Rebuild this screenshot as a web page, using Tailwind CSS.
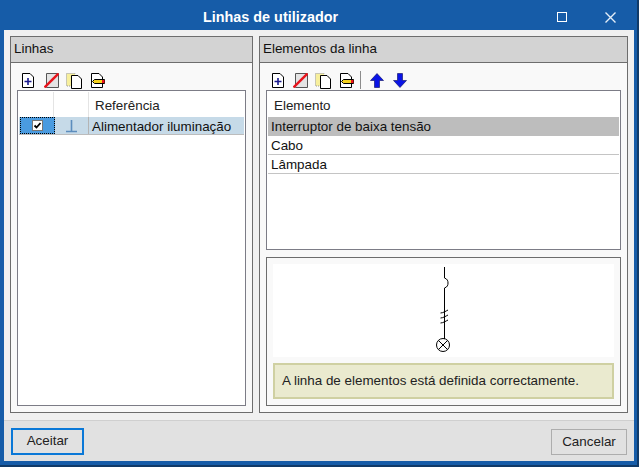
<!DOCTYPE html>
<html lang="en">
<head>
  <meta charset="UTF-8" />
  <title>Linhas de utilizador</title>
  <script src="https://cdn.jsdelivr.net/npm/@tailwindcss/browser@4"></script>
</head>
<body class="bg-[#2a3a4a] overflow-hidden font-['Liberation_Sans',Arial,sans-serif] text-[13.4px] text-[#111]">
  <div class="w-[639px] h-[467px] flex flex-col bg-[#165ca8] border-b-2 border-r-2 border-b-[#103a68] border-r-[#103a68]">

    <!-- Title bar -->
    <header class="h-[30px] flex items-center relative shrink-0">
      <h1 class="w-full text-center pr-[96px] pt-[5px] font-bold text-white text-[14.4px]">Linhas de utilizador</h1>
      <svg class="absolute left-[557px] top-[12px]" width="10" height="10" viewBox="0 0 10 10"><rect x="0.5" y="0.5" width="9" height="9" fill="none" stroke="#fff"/></svg>
      <svg class="absolute left-[605px] top-[12px]" width="11" height="11" viewBox="0 0 11 11"><path d="M0.5 0.5L10.5 10.5M10.5 0.5L0.5 10.5" stroke="#e4eef8" stroke-width="1.4"/></svg>
    </header>

    <div class="mx-[4px] mr-[3px] h-[431px] flex flex-col bg-[#f0f0f0]">
      <main class="h-[390px] flex gap-[6px] pl-[6px] pt-[6px] pr-[6px] shrink-0">

        <!-- Linhas -->
        <section class="w-[243px] h-[377px] border border-[#6d6d6d] bg-[#f9f9f9] flex flex-col">
          <div class="h-[26px] bg-[#d3d3d3] border-b border-[#6d6d6d] pl-[3px] flex items-center shrink-0">Linhas</div>
          <div class="h-[27px] pl-[11px] pt-[10px] flex items-start shrink-0">
            <svg width="12" height="15" viewBox="0 0 12 15"><path d="M0.5 0.5H8L11.5 4V14.5H0.5Z" fill="#fff" stroke="#000"/><path d="M6 5V12M2.5 8.5H9.5" stroke="#1a1a8c" stroke-width="1.6"/></svg>
            <svg class="ml-[10px]" width="15" height="15" viewBox="0 0 15 15"><path d="M2.5 0.5H14.5V14.5H2.5Z" fill="#e4e4e4" stroke="#555"/><path d="M0.5 14.5L14.5 0.5" stroke="#e8141c" stroke-width="2.4"/></svg>
            <svg class="ml-[7px]" width="16" height="16" viewBox="0 0 16 16"><path d="M0.5 0.5H9V13H0.5Z" fill="#f7ef9c" stroke="#999" stroke-dasharray="1 1"/><path d="M5.5 2.5H12L15.5 6V15.5H5.5Z" fill="#fff" stroke="#000"/></svg>
            <svg class="ml-[9px]" width="14" height="15" viewBox="0 0 14 15"><path d="M0.5 0.5H8L11.5 4V14.5H0.5Z" fill="#fff" stroke="#000"/><path d="M3.5 6.5H13.5V10.5H3.5L1.5 8.5Z" fill="#f5d21f" stroke="#000"/><rect x="11" y="7" width="2.5" height="3" fill="#e8141c"/></svg>
          </div>
          <div class="mx-[6px] h-[316px] border border-[#7c7c86] bg-white p-px">
            <div class="h-[25px] flex">
              <div class="w-[35px] border-r border-[#e4e4e4]"></div>
              <div class="w-[35px] border-r border-[#e4e4e4]"></div>
              <div class="pl-[6px] pt-[4px] text-[#222]">Referência</div>
            </div>
            <div class="h-[18px] flex bg-[#c6dae8] border-b border-[#bcbcbc]">
              <div class="w-[35px] ml-[1px] -mr-[1px] bg-[#4a9be0] border border-dotted border-black flex items-center justify-center">
                <svg width="11" height="11" viewBox="0 0 11 11"><rect x="0.5" y="0.5" width="10" height="10" fill="#fff" stroke="#777"/><path d="M2.5 5.5L4.5 7.5L8.5 3" fill="none" stroke="#000" stroke-width="1.8"/></svg>
              </div>
              <div class="w-[35px] border-r border-[#b4b4b4] flex items-center justify-center">
                <svg width="13" height="14" viewBox="0 0 13 14"><path d="M6.5 1V12.5M1 12.5H12" fill="none" stroke="#5c8dbd" stroke-width="1.6"/></svg>
              </div>
              <div class="pl-[3px] leading-[19px]">Alimentador iluminação</div>
            </div>
          </div>
        </section>

        <!-- Elementos da linha -->
        <section class="w-[369px] h-[377px] border border-[#6d6d6d] bg-[#f9f9f9] flex flex-col">
          <div class="h-[26px] bg-[#d3d3d3] border-b border-[#6d6d6d] pl-[3px] flex items-center shrink-0">Elementos da linha</div>
          <div class="h-[27px] pl-[12px] pt-[10px] flex items-start shrink-0">
            <svg width="12" height="15" viewBox="0 0 12 15"><path d="M0.5 0.5H8L11.5 4V14.5H0.5Z" fill="#fff" stroke="#000"/><path d="M6 5V12M2.5 8.5H9.5" stroke="#1a1a8c" stroke-width="1.6"/></svg>
            <svg class="ml-[9px]" width="15" height="15" viewBox="0 0 15 15"><path d="M2.5 0.5H14.5V14.5H2.5Z" fill="#e4e4e4" stroke="#555"/><path d="M0.5 14.5L14.5 0.5" stroke="#e8141c" stroke-width="2.4"/></svg>
            <svg class="ml-[7px]" width="16" height="16" viewBox="0 0 16 16"><path d="M0.5 0.5H9V13H0.5Z" fill="#f7ef9c" stroke="#999" stroke-dasharray="1 1"/><path d="M5.5 2.5H12L15.5 6V15.5H5.5Z" fill="#fff" stroke="#000"/></svg>
            <svg class="ml-[9px]" width="14" height="15" viewBox="0 0 14 15"><path d="M0.5 0.5H8L11.5 4V14.5H0.5Z" fill="#fff" stroke="#000"/><path d="M3.5 6.5H13.5V10.5H3.5L1.5 8.5Z" fill="#f5d21f" stroke="#000"/><rect x="11" y="7" width="2.5" height="3" fill="#e8141c"/></svg>
            <div class="w-px h-[18px] ml-[6px] -mt-[2px] bg-[#8c8c8c]"></div>
            <svg class="ml-[9px]" width="14" height="15" viewBox="0 0 14 15"><path d="M7 0.5L13.5 7.5H9.5V14.5H4.5V7.5H0.5Z" fill="#0a14e6" stroke="#06085c" stroke-width="0.6"/></svg>
            <svg class="ml-[9px]" width="14" height="15" viewBox="0 0 14 15"><path d="M7 14.5L13.5 7.5H9.5V0.5H4.5V7.5H0.5Z" fill="#0a14e6" stroke="#06085c" stroke-width="0.6"/></svg>
          </div>
          <div class="mx-[6px] h-[160px] border border-[#7c7c86] bg-white p-px shrink-0">
            <div class="h-[25px] pl-[6px] pt-[4px] text-[#222]">Elemento</div>
            <div class="h-[19px] bg-[#bdbdbd] pl-[3px] leading-[19px]">Interruptor de baixa tensão</div>
            <div class="h-[19px] pl-[3px] leading-[19px] border-b border-[#c4c4c4]">Cabo</div>
            <div class="h-[19px] pl-[3px] leading-[20px] border-b border-[#c4c4c4]">Lâmpada</div>
          </div>
          <div class="mx-[6px] mt-[7px] h-[149px] border border-[#6d6d6d] p-[6px] flex flex-col gap-[6px]">
            <div class="h-[93px] bg-white flex justify-center shrink-0">
              <svg class="mt-[3px] ml-[3px]" width="20" height="88" viewBox="0 0 20 88"><g fill="none" stroke="#000"><path d="M9.5 0V11C12.5 12 13 14 13 16C13 18 12.5 20 9.5 21V72"/><path d="M5.5 46C8 46 11 44 13 43M5.5 51C8 51 11 49 13 48M5.5 56C8 56 11 54 13 53"/><circle cx="8" cy="78" r="6.5"/><path d="M3.5 73.5L12.5 82.5M12.5 73.5L3.5 82.5"/></g></svg>
            </div>
            <div class="h-[37px] bg-[#eaeacf] border-2 border-[#cfd0a2] flex items-center pl-[7px] text-[#222]">A linha de elementos está definida correctamente.</div>
          </div>
        </section>
      </main>

      <!-- Footer -->
      <footer class="flex-1 bg-[#e1e1e1] border-t border-[#cfcfcf] flex items-start justify-between pl-[7px] pr-[7px] pt-[7px]">
        <button class="w-[73px] h-[27px] border-2 border-[#0a78d7] bg-[#e1e1e1] text-[#222]">Aceitar</button>
        <button class="w-[76px] h-[26px] mt-px border border-[#adadad] bg-[#e1e1e1] text-[#222]">Cancelar</button>
      </footer>
    </div>
  </div>
</body>
</html>
